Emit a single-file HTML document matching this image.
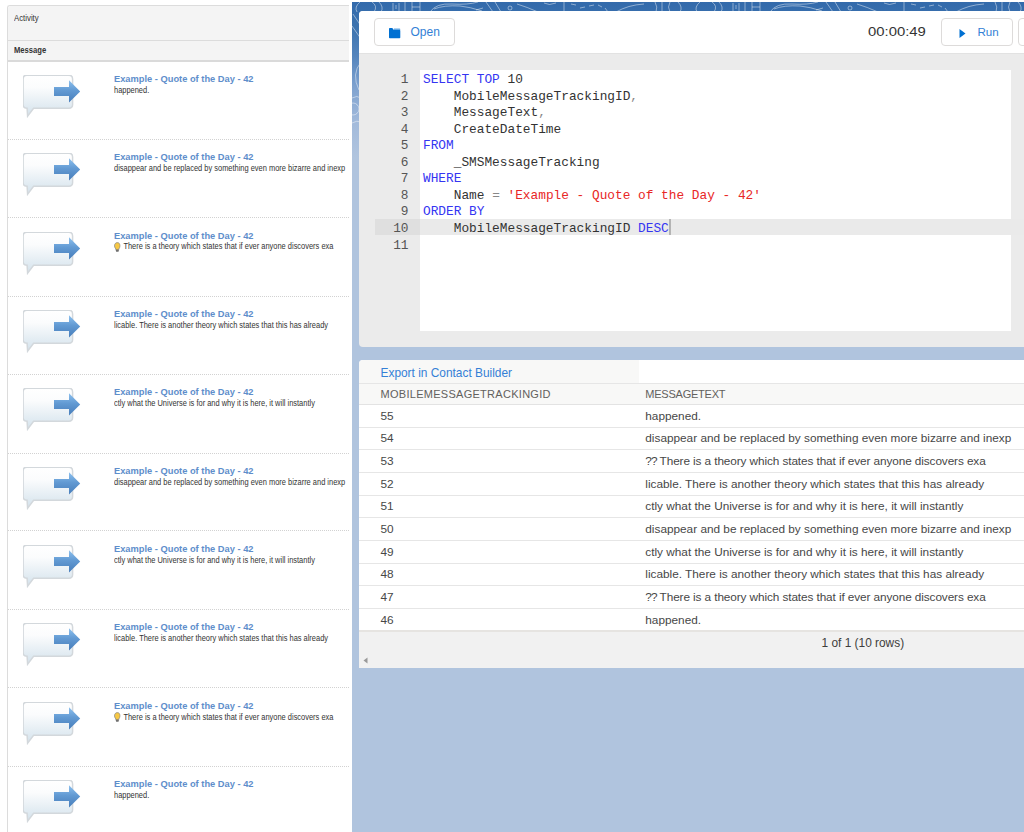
<!DOCTYPE html>
<html><head><meta charset="utf-8">
<style>
*{box-sizing:border-box;margin:0;padding:0}
html,body{width:1024px;height:832px;overflow:hidden;background:#fff;font-family:"Liberation Sans",sans-serif}
#lp{position:absolute;left:7px;top:5px;width:342px;height:840px;border-left:1px solid #dcdcdc;border-top:1px solid #dcdcdc;border-top-left-radius:3px;background:#fff;overflow:hidden}
#lp .h1{position:absolute;left:0;top:0;width:100%;height:35px;background:#f4f4f4;border-bottom:1px solid #dcdcdc}
#lp .h2{position:absolute;left:0;top:35px;width:100%;height:21px;background:#f4f4f4;border-bottom:2px solid #dadada}
#lp .t1{position:absolute;left:6.3px;top:6.5px;font-size:8.4px;color:#333;white-space:nowrap;transform:scaleX(0.93);transform-origin:0 0}
#lp .t2{position:absolute;left:6.3px;top:3.8px;font-size:8.3px;font-weight:bold;color:#333;white-space:nowrap;transform:scaleX(0.92);transform-origin:0 0}
.item{position:absolute;left:0;width:100%;height:78.35px}
.sep{position:absolute;left:0;width:100%;height:1px;border-top:1px dotted #d2d2d2}
.item .ic{position:absolute;left:15px;top:13px}
.item .tt{position:absolute;left:106px;top:11px;font-size:9.6px;font-weight:bold;color:#5e8ecb;white-space:nowrap;transform:scaleX(0.969);transform-origin:0 0}
.item .bd{position:absolute;left:106px;top:22.8px;font-size:9px;color:#333;white-space:nowrap;transform:scaleX(0.828);transform-origin:0 0}
.bulb{display:inline-block;margin-right:1px;vertical-align:-2.4px}
#rb{position:absolute;left:352px;top:2px;width:672px;height:830px;background:linear-gradient(to bottom,#336aab 0px,#3c73af 25px,#5585bd 55px,#7fa2cf 85px,#a2badb 120px,#b0c4de 155px);overflow:hidden}
#ed{position:absolute;left:359px;top:11px;width:700px;height:336px;background:#ebebeb;border-radius:4px;overflow:hidden}
#tb{position:absolute;left:0;top:0;width:100%;height:43px;background:#fff;border-bottom:1px solid #e2e2e2}
.btn{position:absolute;top:7px;height:28px;border:1px solid #dddbda;border-radius:4px;background:#fff}
.btxt{position:absolute;font-size:12px;color:#3381d6;white-space:nowrap}
#code{position:absolute;left:60.5px;top:59px;width:591.5px;height:261px;background:#fff}
#gut{position:absolute;left:0;top:59px;width:60.5px;height:261px}
.ln{position:absolute;left:0;width:49.5px;height:16.55px;text-align:right;font-family:"Liberation Mono",monospace;font-size:12.8px;line-height:16.55px;color:#555;white-space:pre}
.cl{position:absolute;left:64px;height:16.55px;font-family:"Liberation Mono",monospace;font-size:12.8px;line-height:16.55px;color:#333;white-space:pre}
.hl{position:absolute;left:16px;top:207.95px;width:700px;height:16.55px;background:#eaeaea}
.hlg{position:absolute;left:16px;top:207.95px;width:44.5px;height:16.55px;background:#dfdfdf}
.kw{color:#3535f2}
.st{color:#e82626}
.op{color:#888}
#res{position:absolute;left:359px;top:360px;width:700px;height:308px;background:#fff;border-top-left-radius:4px;overflow:hidden}
.exp{position:absolute;left:0;top:0;width:279.5px;height:24px;background:#f8f8f7;border-bottom:1px solid #e6e6e6}
.exp2{position:absolute;left:279.5px;top:0;width:500px;height:24px;background:#fff;border-bottom:1px solid #e6e6e6}
.hdr{position:absolute;left:0;top:24px;width:100%;height:21px;background:#f8f8f7;border-bottom:1px solid #e3e3e3;font-size:11px;color:#62605d}
.row{position:absolute;left:0;width:100%;border-bottom:1px solid #e6e6e6;font-size:11.8px;color:#474747;background:#fff}
.row > span, .hdr > span{position:absolute;white-space:nowrap}
.foot{position:absolute;left:0;top:270px;width:100%;height:38px;background:#f1f1f1;border-top:2px solid #e6e4e1}
</style></head><body>

<div id="lp">
  <div class="h1"><div class="t1">Activity</div></div>
  <div class="h2"><div class="t2">Message</div></div>
  <div class="item" style="top:56.00px"><svg class="ic" width="62" height="46" viewBox="0 0 62 46">
<defs>
<linearGradient id="bg" x1="0" y1="0" x2="0" y2="1"><stop offset="0" stop-color="#ffffff"/><stop offset="0.3" stop-color="#fbfcfd"/><stop offset="1" stop-color="#d3e2ec"/></linearGradient>
<linearGradient id="ag" x1="0" y1="0" x2="0" y2="1"><stop offset="0" stop-color="#8cc0ee"/><stop offset="0.45" stop-color="#629ad3"/><stop offset="1" stop-color="#477dba"/></linearGradient>
</defs>
<path d="M4.2 0.5 H46.3 Q50 0.5 50 4.2 V29.8 Q50 33.5 46.3 33.5 H11 L5 41.5 L4.5 33.5 H4.2 Q0.5 33.5 0.5 29.8 V4.2 Q0.5 0.5 4.2 0.5 Z" fill="url(#bg)" stroke="#d3d8dc" stroke-width="1.5" transform="translate(-0.4 -0.3)"/>
<path d="M31 12 H46 V5.3 L57.2 16.6 L46 27.6 V21 H31 Z" fill="url(#ag)"/>
</svg><div class="tt">Example - Quote of the Day - 42</div><div class="bd">happened.</div></div>
<div class="item" style="top:134.35px"><svg class="ic" width="62" height="46" viewBox="0 0 62 46">
<defs>
<linearGradient id="bg" x1="0" y1="0" x2="0" y2="1"><stop offset="0" stop-color="#ffffff"/><stop offset="0.3" stop-color="#fbfcfd"/><stop offset="1" stop-color="#d3e2ec"/></linearGradient>
<linearGradient id="ag" x1="0" y1="0" x2="0" y2="1"><stop offset="0" stop-color="#8cc0ee"/><stop offset="0.45" stop-color="#629ad3"/><stop offset="1" stop-color="#477dba"/></linearGradient>
</defs>
<path d="M4.2 0.5 H46.3 Q50 0.5 50 4.2 V29.8 Q50 33.5 46.3 33.5 H11 L5 41.5 L4.5 33.5 H4.2 Q0.5 33.5 0.5 29.8 V4.2 Q0.5 0.5 4.2 0.5 Z" fill="url(#bg)" stroke="#d3d8dc" stroke-width="1.5" transform="translate(-0.4 -0.3)"/>
<path d="M31 12 H46 V5.3 L57.2 16.6 L46 27.6 V21 H31 Z" fill="url(#ag)"/>
</svg><div class="tt">Example - Quote of the Day - 42</div><div class="bd">disappear and be replaced by something even more bizarre and inexp</div></div>
<div class="item" style="top:212.70px"><svg class="ic" width="62" height="46" viewBox="0 0 62 46">
<defs>
<linearGradient id="bg" x1="0" y1="0" x2="0" y2="1"><stop offset="0" stop-color="#ffffff"/><stop offset="0.3" stop-color="#fbfcfd"/><stop offset="1" stop-color="#d3e2ec"/></linearGradient>
<linearGradient id="ag" x1="0" y1="0" x2="0" y2="1"><stop offset="0" stop-color="#8cc0ee"/><stop offset="0.45" stop-color="#629ad3"/><stop offset="1" stop-color="#477dba"/></linearGradient>
</defs>
<path d="M4.2 0.5 H46.3 Q50 0.5 50 4.2 V29.8 Q50 33.5 46.3 33.5 H11 L5 41.5 L4.5 33.5 H4.2 Q0.5 33.5 0.5 29.8 V4.2 Q0.5 0.5 4.2 0.5 Z" fill="url(#bg)" stroke="#d3d8dc" stroke-width="1.5" transform="translate(-0.4 -0.3)"/>
<path d="M31 12 H46 V5.3 L57.2 16.6 L46 27.6 V21 H31 Z" fill="url(#ag)"/>
</svg><div class="tt">Example - Quote of the Day - 42</div><div class="bd"><svg class="bulb" width="8" height="10" viewBox="0 0 8 10"><path d="M4 0.6 C1.9 0.6 0.6 2.1 0.6 3.9 C0.6 5.3 1.6 6.1 2.3 7 V8.2 H5.7 V7 C6.4 6.1 7.4 5.3 7.4 3.9 C7.4 2.1 6.1 0.6 4 0.6 Z" fill="#f7c844" stroke="#8d8d8d" stroke-width="0.9"/><rect x="2.4" y="7.6" width="3.2" height="2.2" rx="0.6" fill="#6f6f6f"/></svg> There is a theory which states that if ever anyone discovers exa</div></div>
<div class="item" style="top:291.05px"><svg class="ic" width="62" height="46" viewBox="0 0 62 46">
<defs>
<linearGradient id="bg" x1="0" y1="0" x2="0" y2="1"><stop offset="0" stop-color="#ffffff"/><stop offset="0.3" stop-color="#fbfcfd"/><stop offset="1" stop-color="#d3e2ec"/></linearGradient>
<linearGradient id="ag" x1="0" y1="0" x2="0" y2="1"><stop offset="0" stop-color="#8cc0ee"/><stop offset="0.45" stop-color="#629ad3"/><stop offset="1" stop-color="#477dba"/></linearGradient>
</defs>
<path d="M4.2 0.5 H46.3 Q50 0.5 50 4.2 V29.8 Q50 33.5 46.3 33.5 H11 L5 41.5 L4.5 33.5 H4.2 Q0.5 33.5 0.5 29.8 V4.2 Q0.5 0.5 4.2 0.5 Z" fill="url(#bg)" stroke="#d3d8dc" stroke-width="1.5" transform="translate(-0.4 -0.3)"/>
<path d="M31 12 H46 V5.3 L57.2 16.6 L46 27.6 V21 H31 Z" fill="url(#ag)"/>
</svg><div class="tt">Example - Quote of the Day - 42</div><div class="bd">licable. There is another theory which states that this has already</div></div>
<div class="item" style="top:369.40px"><svg class="ic" width="62" height="46" viewBox="0 0 62 46">
<defs>
<linearGradient id="bg" x1="0" y1="0" x2="0" y2="1"><stop offset="0" stop-color="#ffffff"/><stop offset="0.3" stop-color="#fbfcfd"/><stop offset="1" stop-color="#d3e2ec"/></linearGradient>
<linearGradient id="ag" x1="0" y1="0" x2="0" y2="1"><stop offset="0" stop-color="#8cc0ee"/><stop offset="0.45" stop-color="#629ad3"/><stop offset="1" stop-color="#477dba"/></linearGradient>
</defs>
<path d="M4.2 0.5 H46.3 Q50 0.5 50 4.2 V29.8 Q50 33.5 46.3 33.5 H11 L5 41.5 L4.5 33.5 H4.2 Q0.5 33.5 0.5 29.8 V4.2 Q0.5 0.5 4.2 0.5 Z" fill="url(#bg)" stroke="#d3d8dc" stroke-width="1.5" transform="translate(-0.4 -0.3)"/>
<path d="M31 12 H46 V5.3 L57.2 16.6 L46 27.6 V21 H31 Z" fill="url(#ag)"/>
</svg><div class="tt">Example - Quote of the Day - 42</div><div class="bd">ctly what the Universe is for and why it is here, it will instantly</div></div>
<div class="item" style="top:447.75px"><svg class="ic" width="62" height="46" viewBox="0 0 62 46">
<defs>
<linearGradient id="bg" x1="0" y1="0" x2="0" y2="1"><stop offset="0" stop-color="#ffffff"/><stop offset="0.3" stop-color="#fbfcfd"/><stop offset="1" stop-color="#d3e2ec"/></linearGradient>
<linearGradient id="ag" x1="0" y1="0" x2="0" y2="1"><stop offset="0" stop-color="#8cc0ee"/><stop offset="0.45" stop-color="#629ad3"/><stop offset="1" stop-color="#477dba"/></linearGradient>
</defs>
<path d="M4.2 0.5 H46.3 Q50 0.5 50 4.2 V29.8 Q50 33.5 46.3 33.5 H11 L5 41.5 L4.5 33.5 H4.2 Q0.5 33.5 0.5 29.8 V4.2 Q0.5 0.5 4.2 0.5 Z" fill="url(#bg)" stroke="#d3d8dc" stroke-width="1.5" transform="translate(-0.4 -0.3)"/>
<path d="M31 12 H46 V5.3 L57.2 16.6 L46 27.6 V21 H31 Z" fill="url(#ag)"/>
</svg><div class="tt">Example - Quote of the Day - 42</div><div class="bd">disappear and be replaced by something even more bizarre and inexp</div></div>
<div class="item" style="top:526.10px"><svg class="ic" width="62" height="46" viewBox="0 0 62 46">
<defs>
<linearGradient id="bg" x1="0" y1="0" x2="0" y2="1"><stop offset="0" stop-color="#ffffff"/><stop offset="0.3" stop-color="#fbfcfd"/><stop offset="1" stop-color="#d3e2ec"/></linearGradient>
<linearGradient id="ag" x1="0" y1="0" x2="0" y2="1"><stop offset="0" stop-color="#8cc0ee"/><stop offset="0.45" stop-color="#629ad3"/><stop offset="1" stop-color="#477dba"/></linearGradient>
</defs>
<path d="M4.2 0.5 H46.3 Q50 0.5 50 4.2 V29.8 Q50 33.5 46.3 33.5 H11 L5 41.5 L4.5 33.5 H4.2 Q0.5 33.5 0.5 29.8 V4.2 Q0.5 0.5 4.2 0.5 Z" fill="url(#bg)" stroke="#d3d8dc" stroke-width="1.5" transform="translate(-0.4 -0.3)"/>
<path d="M31 12 H46 V5.3 L57.2 16.6 L46 27.6 V21 H31 Z" fill="url(#ag)"/>
</svg><div class="tt">Example - Quote of the Day - 42</div><div class="bd">ctly what the Universe is for and why it is here, it will instantly</div></div>
<div class="item" style="top:604.45px"><svg class="ic" width="62" height="46" viewBox="0 0 62 46">
<defs>
<linearGradient id="bg" x1="0" y1="0" x2="0" y2="1"><stop offset="0" stop-color="#ffffff"/><stop offset="0.3" stop-color="#fbfcfd"/><stop offset="1" stop-color="#d3e2ec"/></linearGradient>
<linearGradient id="ag" x1="0" y1="0" x2="0" y2="1"><stop offset="0" stop-color="#8cc0ee"/><stop offset="0.45" stop-color="#629ad3"/><stop offset="1" stop-color="#477dba"/></linearGradient>
</defs>
<path d="M4.2 0.5 H46.3 Q50 0.5 50 4.2 V29.8 Q50 33.5 46.3 33.5 H11 L5 41.5 L4.5 33.5 H4.2 Q0.5 33.5 0.5 29.8 V4.2 Q0.5 0.5 4.2 0.5 Z" fill="url(#bg)" stroke="#d3d8dc" stroke-width="1.5" transform="translate(-0.4 -0.3)"/>
<path d="M31 12 H46 V5.3 L57.2 16.6 L46 27.6 V21 H31 Z" fill="url(#ag)"/>
</svg><div class="tt">Example - Quote of the Day - 42</div><div class="bd">licable. There is another theory which states that this has already</div></div>
<div class="item" style="top:682.80px"><svg class="ic" width="62" height="46" viewBox="0 0 62 46">
<defs>
<linearGradient id="bg" x1="0" y1="0" x2="0" y2="1"><stop offset="0" stop-color="#ffffff"/><stop offset="0.3" stop-color="#fbfcfd"/><stop offset="1" stop-color="#d3e2ec"/></linearGradient>
<linearGradient id="ag" x1="0" y1="0" x2="0" y2="1"><stop offset="0" stop-color="#8cc0ee"/><stop offset="0.45" stop-color="#629ad3"/><stop offset="1" stop-color="#477dba"/></linearGradient>
</defs>
<path d="M4.2 0.5 H46.3 Q50 0.5 50 4.2 V29.8 Q50 33.5 46.3 33.5 H11 L5 41.5 L4.5 33.5 H4.2 Q0.5 33.5 0.5 29.8 V4.2 Q0.5 0.5 4.2 0.5 Z" fill="url(#bg)" stroke="#d3d8dc" stroke-width="1.5" transform="translate(-0.4 -0.3)"/>
<path d="M31 12 H46 V5.3 L57.2 16.6 L46 27.6 V21 H31 Z" fill="url(#ag)"/>
</svg><div class="tt">Example - Quote of the Day - 42</div><div class="bd"><svg class="bulb" width="8" height="10" viewBox="0 0 8 10"><path d="M4 0.6 C1.9 0.6 0.6 2.1 0.6 3.9 C0.6 5.3 1.6 6.1 2.3 7 V8.2 H5.7 V7 C6.4 6.1 7.4 5.3 7.4 3.9 C7.4 2.1 6.1 0.6 4 0.6 Z" fill="#f7c844" stroke="#8d8d8d" stroke-width="0.9"/><rect x="2.4" y="7.6" width="3.2" height="2.2" rx="0.6" fill="#6f6f6f"/></svg> There is a theory which states that if ever anyone discovers exa</div></div>
<div class="item" style="top:761.15px"><svg class="ic" width="62" height="46" viewBox="0 0 62 46">
<defs>
<linearGradient id="bg" x1="0" y1="0" x2="0" y2="1"><stop offset="0" stop-color="#ffffff"/><stop offset="0.3" stop-color="#fbfcfd"/><stop offset="1" stop-color="#d3e2ec"/></linearGradient>
<linearGradient id="ag" x1="0" y1="0" x2="0" y2="1"><stop offset="0" stop-color="#8cc0ee"/><stop offset="0.45" stop-color="#629ad3"/><stop offset="1" stop-color="#477dba"/></linearGradient>
</defs>
<path d="M4.2 0.5 H46.3 Q50 0.5 50 4.2 V29.8 Q50 33.5 46.3 33.5 H11 L5 41.5 L4.5 33.5 H4.2 Q0.5 33.5 0.5 29.8 V4.2 Q0.5 0.5 4.2 0.5 Z" fill="url(#bg)" stroke="#d3d8dc" stroke-width="1.5" transform="translate(-0.4 -0.3)"/>
<path d="M31 12 H46 V5.3 L57.2 16.6 L46 27.6 V21 H31 Z" fill="url(#ag)"/>
</svg><div class="tt">Example - Quote of the Day - 42</div><div class="bd">happened.</div></div><div class="sep" style="top:133px"></div><div class="sep" style="top:211px"></div><div class="sep" style="top:290px"></div><div class="sep" style="top:368px"></div><div class="sep" style="top:447px"></div><div class="sep" style="top:524px"></div><div class="sep" style="top:603px"></div><div class="sep" style="top:681px"></div><div class="sep" style="top:760px"></div>
</div>

<div id="rb"><svg width="672" height="200" style="position:absolute;left:0;top:0" fill="none" stroke="rgba(255,255,255,0.5)" stroke-width="0.9">
<g><path d="M8 0 Q2 5 5 10"/><path d="M20 0 Q26 4 22 10"/><path d="M27 0 Q32 5 29 10"/>
<path d="M41 1 V10 M44 3 V7 M47 1 V10 M53 0 V10 M60 0 V10 M68 0 V10 M60 5 H68"/>
<path d="M78 10 Q84 1 100 2 Q116 3 126 0"/><path d="M82 7 Q92 3 108 4 Q118 5 130 9"/><path d="M124 8 L131 6"/>
<path d="M134 0 L141 10 M143 0 L149 10"/><circle cx="158" cy="6" r="2"/><path d="M165 2 Q175 5 186 10"/>
<path d="M192 1 Q197 4 204 1"/><path d="M212 0 V10"/><path d="M219 2 L224 3 M228 6 L233 5 M237 4 L242 3 M246 3 L250 5 M253 6 L256 10"/>
<path d="M264 10 Q276 3 292 2"/><path d="M303 0 Q306 5 304 10 M310 0 V10 M318 0 Q315 5 318 10 M326 0 Q331 5 328 10"/></g><g transform="translate(340 0)"><path d="M8 0 Q2 5 5 10"/><path d="M20 0 Q26 4 22 10"/><path d="M27 0 Q32 5 29 10"/>
<path d="M41 1 V10 M44 3 V7 M47 1 V10 M53 0 V10 M60 0 V10 M68 0 V10 M60 5 H68"/>
<path d="M78 10 Q84 1 100 2 Q116 3 126 0"/><path d="M82 7 Q92 3 108 4 Q118 5 130 9"/><path d="M124 8 L131 6"/>
<path d="M134 0 L141 10 M143 0 L149 10"/><circle cx="158" cy="6" r="2"/><path d="M165 2 Q175 5 186 10"/>
<path d="M192 1 Q197 4 204 1"/><path d="M212 0 V10"/><path d="M219 2 L224 3 M228 6 L233 5 M237 4 L242 3 M246 3 L250 5 M253 6 L256 10"/>
<path d="M264 10 Q276 3 292 2"/><path d="M303 0 Q306 5 304 10 M310 0 V10 M318 0 Q315 5 318 10 M326 0 Q331 5 328 10"/></g>
<path d="M1 12 L9 24"/><path d="M0 24 L9 37"/><path d="M9 60 Q-1 72 7 88"/><path d="M0 96 Q5 93 9 96"/><circle cx="1" cy="107" r="6"/><path d="M0 121 Q5 118 9 120"/>
</svg></div>

<div id="ed">
  <div id="tb">
    <div class="btn" style="left:14.5px;width:81px"></div>
    <svg style="position:absolute;left:29.5px;top:16.8px" width="12" height="11" viewBox="0 0 12 11"><path d="M4.9 0.5 H10.6 Q11.2 0.5 11.2 1.1 V2 H4.9 Z" fill="#0070d2" opacity="0.6"/><path d="M0 0.8 Q0 0 0.8 0 H3.3 L4.9 1.9 H10.6 Q11.3 1.9 11.3 2.6 V9.4 Q11.3 10.2 10.5 10.2 H0.8 Q0 10.2 0 9.4 Z" fill="#0070d2"/></svg>
    <div class="btxt" style="left:51.5px;top:14px">Open</div>
    <div class="btxt" style="left:509px;top:13.2px;font-size:13.7px;color:#333;transform:scaleX(1.085);transform-origin:0 0">00:00:49</div>
    <div class="btn" style="left:582px;width:72px"></div>
    <svg style="position:absolute;left:599.5px;top:17.5px" width="7" height="9" viewBox="0 0 7 9"><path d="M0.5 0 L6.5 4.5 L0.5 9 Z" fill="#0070d2"/></svg>
    <div class="btxt" style="left:618.5px;top:14px;font-size:11.6px">Run</div>
    <div class="btn" style="left:658.5px;width:60px"></div>
  </div>
  <div class="hl"></div>
  <div id="code"></div>
  <div class="hl" style="left:60.5px;width:591.5px;background:#eaeaea"></div><div style="position:absolute;left:309.5px;top:207.95px;width:2px;height:16.55px;background:#b4b4b4"></div>
  <div class="hlg"></div>
  <div id="gut" style="left:0"><div class="ln" style="top:2.00px">1</div><div class="cl" style="top:2.00px"><span class="kw">SELECT</span> <span class="kw">TOP</span> 10</div>
<div class="ln" style="top:18.55px">2</div><div class="cl" style="top:18.55px">    MobileMessageTrackingID<span class="op">,</span></div>
<div class="ln" style="top:35.10px">3</div><div class="cl" style="top:35.10px">    MessageText<span class="op">,</span></div>
<div class="ln" style="top:51.65px">4</div><div class="cl" style="top:51.65px">    CreateDateTime</div>
<div class="ln" style="top:68.20px">5</div><div class="cl" style="top:68.20px"><span class="kw">FROM</span></div>
<div class="ln" style="top:84.75px">6</div><div class="cl" style="top:84.75px">    _SMSMessageTracking</div>
<div class="ln" style="top:101.30px">7</div><div class="cl" style="top:101.30px"><span class="kw">WHERE</span></div>
<div class="ln" style="top:117.85px">8</div><div class="cl" style="top:117.85px">    Name <span class="op">=</span> <span class="st">'Example - Quote of the Day - 42'</span></div>
<div class="ln" style="top:134.40px">9</div><div class="cl" style="top:134.40px"><span class="kw">ORDER</span> <span class="kw">BY</span></div>
<div class="ln" style="top:150.95px">10</div><div class="cl" style="top:150.95px">    MobileMessageTrackingID <span class="kw">DESC</span></div>
<div class="ln" style="top:167.50px">11</div><div class="cl" style="top:167.50px"></div></div>
</div>

<div id="res">
  <div class="exp"><span style="position:absolute;left:21.5px;top:6px;font-size:11.9px;color:#3580d6;white-space:nowrap">Export in Contact Builder</span></div>
  <div class="exp2"></div>
  <div class="hdr"><span style="left:21.5px;top:3.8px;letter-spacing:0.28px">MOBILEMESSAGETRACKINGID</span><span style="left:286.3px;top:3.8px;letter-spacing:-0.23px">MESSAGETEXT</span></div>
  <div class="row" style="top:45.00px;height:22.68px"><span style="left:21.5px;top:3.5px">55</span><span style="left:286.3px;top:3.5px">happened.</span></div>
<div class="row" style="top:67.68px;height:22.68px"><span style="left:21.5px;top:3.5px">54</span><span style="left:286.3px;top:3.5px">disappear and be replaced by something even more bizarre and inexp</span></div>
<div class="row" style="top:90.36px;height:22.68px"><span style="left:21.5px;top:3.5px">53</span><span style="left:286.3px;top:3.5px;letter-spacing:-0.1px"><span style="letter-spacing:-0.9px">??</span> There is a theory which states that if ever anyone discovers exa</span></div>
<div class="row" style="top:113.04px;height:22.68px"><span style="left:21.5px;top:3.5px">52</span><span style="left:286.3px;top:3.5px">licable. There is another theory which states that this has already</span></div>
<div class="row" style="top:135.72px;height:22.68px"><span style="left:21.5px;top:3.5px">51</span><span style="left:286.3px;top:3.5px">ctly what the Universe is for and why it is here, it will instantly</span></div>
<div class="row" style="top:158.40px;height:22.68px"><span style="left:21.5px;top:3.5px">50</span><span style="left:286.3px;top:3.5px">disappear and be replaced by something even more bizarre and inexp</span></div>
<div class="row" style="top:181.08px;height:22.68px"><span style="left:21.5px;top:3.5px">49</span><span style="left:286.3px;top:3.5px">ctly what the Universe is for and why it is here, it will instantly</span></div>
<div class="row" style="top:203.76px;height:22.68px"><span style="left:21.5px;top:3.5px">48</span><span style="left:286.3px;top:3.5px">licable. There is another theory which states that this has already</span></div>
<div class="row" style="top:226.44px;height:22.68px"><span style="left:21.5px;top:3.5px">47</span><span style="left:286.3px;top:3.5px;letter-spacing:-0.1px"><span style="letter-spacing:-0.9px">??</span> There is a theory which states that if ever anyone discovers exa</span></div>
<div class="row" style="top:249.12px;height:22.68px"><span style="left:21.5px;top:3.5px">46</span><span style="left:286.3px;top:3.5px">happened.</span></div>
  <div class="foot"><svg style="position:absolute;left:4px;top:24.5px" width="5" height="7" viewBox="0 0 5 7"><path d="M4.5 0.5 L0.5 3.5 L4.5 6.5 Z" fill="#999"/></svg><span style="position:absolute;left:462.5px;top:3.5px;font-size:11.9px;color:#3e3e3c;white-space:nowrap">1 of 1 (10 rows)</span></div>
</div>

</body></html>
